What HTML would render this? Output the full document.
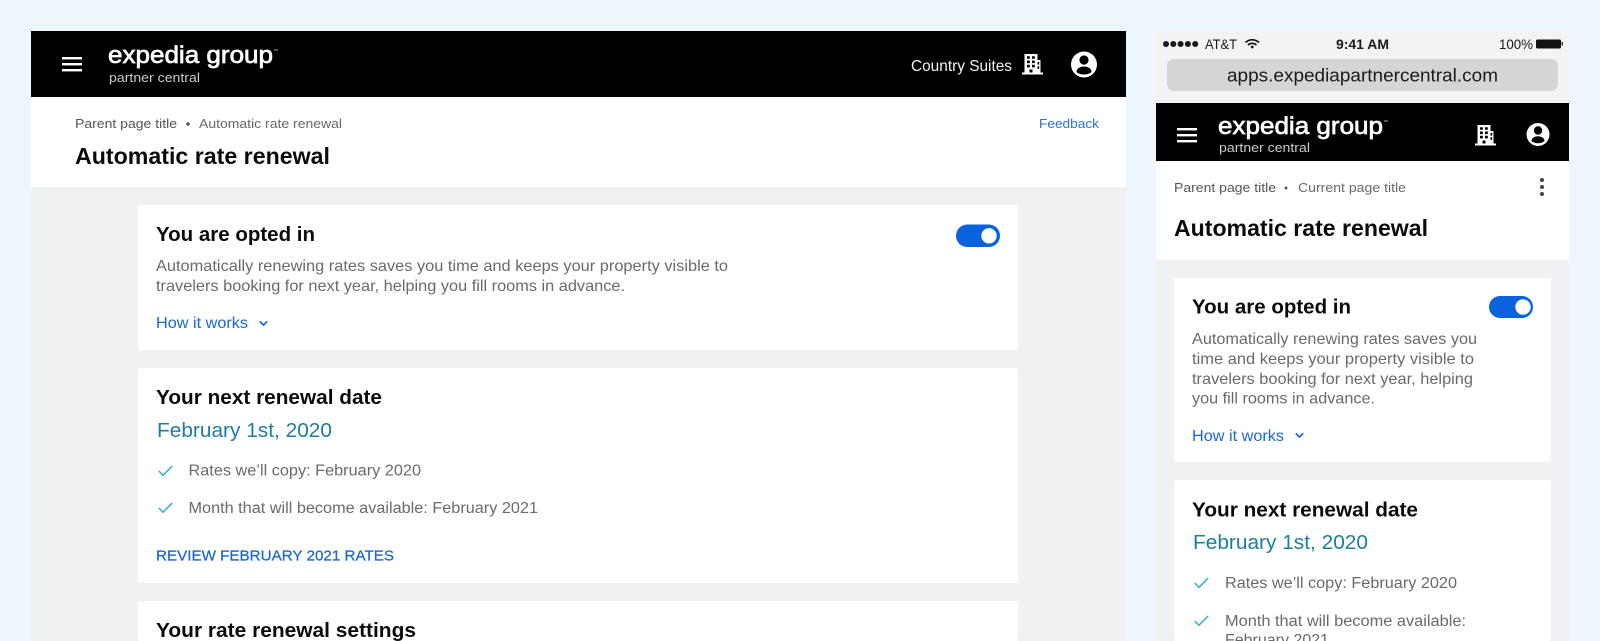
<!DOCTYPE html>
<html lang="en"><head><meta charset="utf-8"><title>Automatic rate renewal</title>
<style>
html,body{margin:0;padding:0;width:1600px;height:641px;overflow:hidden;background:#eef6fd}
svg{display:block}
text{font-family:"Liberation Sans",sans-serif;white-space:pre}
.b{font-weight:700;fill:#0b0b0b}
.g{fill:#6a6a6a}
.l{fill:#1a68d1}
.t{fill:#1b7f9d}
</style></head><body>
<svg width="1600" height="641" viewBox="0 0 1600 641" xmlns="http://www.w3.org/2000/svg">
<defs>
<g id="bld"><path fill="#fff" fill-rule="evenodd" d="M2.500 0h13v6h3v12.500h2.500v2H0v-2h2.500zM5 2.200v2.600h2.800V2.200zM10 2.200v2.600h2.800V2.200zM5 6.500v2.600h2.800V6.500zM10 6.500v2.600h2.800V6.500zM15.500 8v2.600h1.700V8zM5 10.800v2.600h2.800v-2.600zM10 10.800v2.600h2.800v-2.600zM15.500 12.300v2.600h1.700v-2.600zM7.500 15.500v3h3v-3z"/></g>
<path id="chk" fill="none" stroke="#2ab3c4" stroke-width="1.500" d="M0.800 6L5 10.300L14.200 1"/>
<path id="chv" fill="none" stroke="#1a68d1" stroke-width="1.700" d="M0.800 0.800L4.500 4.500L8.200 0.800"/>
</defs>
<rect width="1600" height="641" fill="#eef6fd"/>

<!-- Desktop -->
<rect x="31" y="97" width="1095" height="544" fill="#eff1f3"/>
<rect x="31" y="97" width="1095" height="90" fill="#fff"/>
<rect x="31" y="31" width="1095" height="66" fill="#000"/>
<g fill="#fff"><rect x="62" y="57" width="20" height="2.400"/><rect x="62" y="63" width="20" height="2.400"/><rect x="62" y="69" width="20" height="2.400"/></g>
<text x="108" y="63" font-size="24" fill="#fff" stroke="#fff" stroke-width=".7" textLength="165" lengthAdjust="spacingAndGlyphs">expedia group</text>
<rect x="274" y="49.500" width="4" height="1" fill="#aaa"/>
<text x="109" y="82" font-size="13" fill="#ccc" textLength="91" lengthAdjust="spacingAndGlyphs">partner central</text>
<text x="911" y="71" font-size="16" fill="#f4f4f4" textLength="101" lengthAdjust="spacingAndGlyphs">Country Suites</text>
<use href="#bld" x="1022" y="54"/>
<circle cx="1084" cy="64.500" r="13" fill="#fff"/><circle cx="1084" cy="60" r="4.600" fill="#000"/><path fill="#000" d="M1076.500 72c0-3.500 3.500-5.500 7.500-5.500s7.500 2 7.500 5.500c-2 1.700-4.500 2.500-7.500 2.500s-5.500-.8-7.500-2.500z"/>

<text x="75" y="128" font-size="13" fill="#555" textLength="102" lengthAdjust="spacingAndGlyphs">Parent page title</text>
<circle cx="188" cy="124" r="1.800" fill="#555"/>
<text x="199" y="128" font-size="13" class="g" textLength="143" lengthAdjust="spacingAndGlyphs">Automatic rate renewal</text>
<text x="1039" y="128" font-size="13" fill="#2a73cf" textLength="60" lengthAdjust="spacingAndGlyphs">Feedback</text>
<text x="75" y="164" font-size="23.500" class="b" textLength="255" lengthAdjust="spacingAndGlyphs">Automatic rate renewal</text>

<rect x="138" y="205" width="880" height="145" rx="2" fill="#fff"/>
<text x="156" y="241" font-size="20" class="b" textLength="159" lengthAdjust="spacingAndGlyphs">You are opted in</text>
<text x="156" y="271" font-size="16" class="g" textLength="572" lengthAdjust="spacingAndGlyphs">Automatically renewing rates saves you time and keeps your property visible to</text>
<text x="156" y="291" font-size="16" class="g" textLength="469" lengthAdjust="spacingAndGlyphs">travelers booking for next year, helping you fill rooms in advance.</text>
<text x="156" y="328" font-size="15.500" class="l" textLength="92" lengthAdjust="spacingAndGlyphs">How it works</text>
<use href="#chv" x="259" y="320.500"/>
<rect x="956" y="224.500" width="44" height="22.500" rx="11.250" fill="#0a62dc"/><circle cx="989" cy="235.800" r="7.700" fill="#fff"/>

<rect x="138" y="368" width="880" height="215" rx="2" fill="#fff"/>
<text x="156" y="404" font-size="20" class="b" textLength="226" lengthAdjust="spacingAndGlyphs">Your next renewal date</text>
<text x="157" y="437" font-size="20.500" class="t" textLength="175" lengthAdjust="spacingAndGlyphs">February 1st, 2020</text>
<use href="#chk" x="158" y="465"/>
<text x="188.500" y="475.500" font-size="15.500" class="g" textLength="232.500" lengthAdjust="spacingAndGlyphs">Rates we’ll copy: February 2020</text>
<use href="#chk" x="158" y="502"/>
<text x="188.500" y="513" font-size="15.500" class="g" textLength="349.500" lengthAdjust="spacingAndGlyphs">Month that will become available: February 2021</text>
<text x="156" y="560.500" font-size="15" class="l" stroke="#1a68d1" stroke-width=".25" textLength="238" lengthAdjust="spacingAndGlyphs">REVIEW FEBRUARY 2021 RATES</text>
<rect x="138" y="601" width="880" height="40" rx="2" fill="#fff"/>
<text x="156" y="637" font-size="20" class="b" textLength="260" lengthAdjust="spacingAndGlyphs">Your rate renewal settings</text>

<!-- Mobile -->
<rect x="1156" y="31" width="413" height="72" fill="#f3f3f3"/>
<rect x="1156" y="161" width="413" height="480" fill="#eff1f3"/>
<rect x="1156" y="161" width="413" height="99" fill="#fff"/>
<rect x="1156" y="103" width="413" height="58" fill="#000"/>
<g fill="#1a1a1a"><circle cx="1166" cy="44" r="3"/><circle cx="1173.300" cy="44" r="3"/><circle cx="1180.600" cy="44" r="3"/><circle cx="1187.900" cy="44" r="3"/><circle cx="1195.200" cy="44" r="3"/></g>
<text x="1205" y="49" font-size="13.500" fill="#1a1a1a" textLength="32" lengthAdjust="spacingAndGlyphs">AT&amp;T</text>
<g fill="none" stroke="#111" stroke-width="1.700"><path d="M1245.500 42.500c4-3.600 9.500-3.600 13.500 0"/><path d="M1248 45c2.600-2.200 5.900-2.200 8.500 0"/></g><path fill="#111" d="M1250.500 47l1.750-1.800 1.750 1.800-1.750 1.700z"/>
<text x="1336" y="49" font-size="13.500" font-weight="700" fill="#1a1a1a" textLength="53" lengthAdjust="spacingAndGlyphs">9:41 AM</text>
<text x="1499" y="49" font-size="13.500" fill="#1a1a1a" textLength="34" lengthAdjust="spacingAndGlyphs">100%</text>
<rect x="1536" y="39.500" width="25" height="9" rx="1.500" fill="#111"/><rect x="1561.500" y="42" width="1.500" height="3.500" fill="#333"/>
<rect x="1167" y="59" width="391" height="32" rx="7" fill="#d5d5d5"/>
<text x="1227" y="81.500" font-size="18" fill="#1a1a1a" textLength="271" lengthAdjust="spacingAndGlyphs">apps.expediapartnercentral.com</text>
<g fill="#fff"><rect x="1177" y="128" width="20" height="2.400"/><rect x="1177" y="134" width="20" height="2.400"/><rect x="1177" y="140" width="20" height="2.400"/></g>
<text x="1218" y="134" font-size="24" fill="#fff" stroke="#fff" stroke-width=".7" textLength="165" lengthAdjust="spacingAndGlyphs">expedia group</text>
<rect x="1384" y="120.500" width="4" height="1" fill="#aaa"/>
<text x="1219" y="152" font-size="13" fill="#ccc" textLength="91" lengthAdjust="spacingAndGlyphs">partner central</text>
<use href="#bld" x="1475" y="125"/>
<circle cx="1538" cy="134.500" r="11.500" fill="#fff"/><circle cx="1538" cy="130.500" r="4.200" fill="#000"/><path fill="#000" d="M1531.500 141c0-3 3-4.800 6.500-4.800s6.500 1.800 6.500 4.800c-1.700 1.500-4 2.200-6.500 2.200s-4.800-.7-6.500-2.200z"/>
<text x="1174" y="192" font-size="13" fill="#555" textLength="102" lengthAdjust="spacingAndGlyphs">Parent page title</text>
<circle cx="1286" cy="188" r="1.500" fill="#555"/>
<text x="1298" y="192" font-size="13" class="g" textLength="108" lengthAdjust="spacingAndGlyphs">Current page title</text>
<g fill="#444"><circle cx="1542" cy="180" r="2"/><circle cx="1542" cy="187" r="2"/><circle cx="1542" cy="194" r="2"/></g>
<text x="1174" y="236" font-size="23.500" class="b" textLength="254" lengthAdjust="spacingAndGlyphs">Automatic rate renewal</text>

<rect x="1174" y="278" width="377" height="184" rx="2" fill="#fff"/>
<text x="1192" y="313.500" font-size="20" class="b" textLength="159" lengthAdjust="spacingAndGlyphs">You are opted in</text>
<text x="1192" y="344" font-size="16" class="g" textLength="285" lengthAdjust="spacingAndGlyphs">Automatically renewing rates saves you</text>
<text x="1192" y="364" font-size="16" class="g" textLength="282" lengthAdjust="spacingAndGlyphs">time and keeps your property visible to</text>
<text x="1192" y="384" font-size="16" class="g" textLength="281" lengthAdjust="spacingAndGlyphs">travelers booking for next year, helping</text>
<text x="1192" y="403.500" font-size="16" class="g" textLength="183" lengthAdjust="spacingAndGlyphs">you fill rooms in advance.</text>
<text x="1192" y="441" font-size="15.500" class="l" textLength="92" lengthAdjust="spacingAndGlyphs">How it works</text>
<use href="#chv" x="1295" y="432.500"/>
<rect x="1489" y="296" width="44" height="22" rx="11" fill="#0a62dc"/><circle cx="1523" cy="307" r="7.700" fill="#fff"/>

<rect x="1174" y="480" width="377" height="161" rx="2" fill="#fff"/>
<text x="1192" y="516.500" font-size="20" class="b" textLength="226" lengthAdjust="spacingAndGlyphs">Your next renewal date</text>
<text x="1193" y="549" font-size="20.500" class="t" textLength="175" lengthAdjust="spacingAndGlyphs">February 1st, 2020</text>
<use href="#chk" x="1194" y="577"/>
<text x="1225" y="588" font-size="15.500" class="g" textLength="232" lengthAdjust="spacingAndGlyphs">Rates we’ll copy: February 2020</text>
<use href="#chk" x="1194" y="615"/>
<text x="1225" y="626" font-size="15.500" class="g" textLength="241" lengthAdjust="spacingAndGlyphs">Month that will become available:</text>
<text x="1225" y="645" font-size="15.500" class="g" textLength="104" lengthAdjust="spacingAndGlyphs">February 2021</text>
</svg>
</body></html>
